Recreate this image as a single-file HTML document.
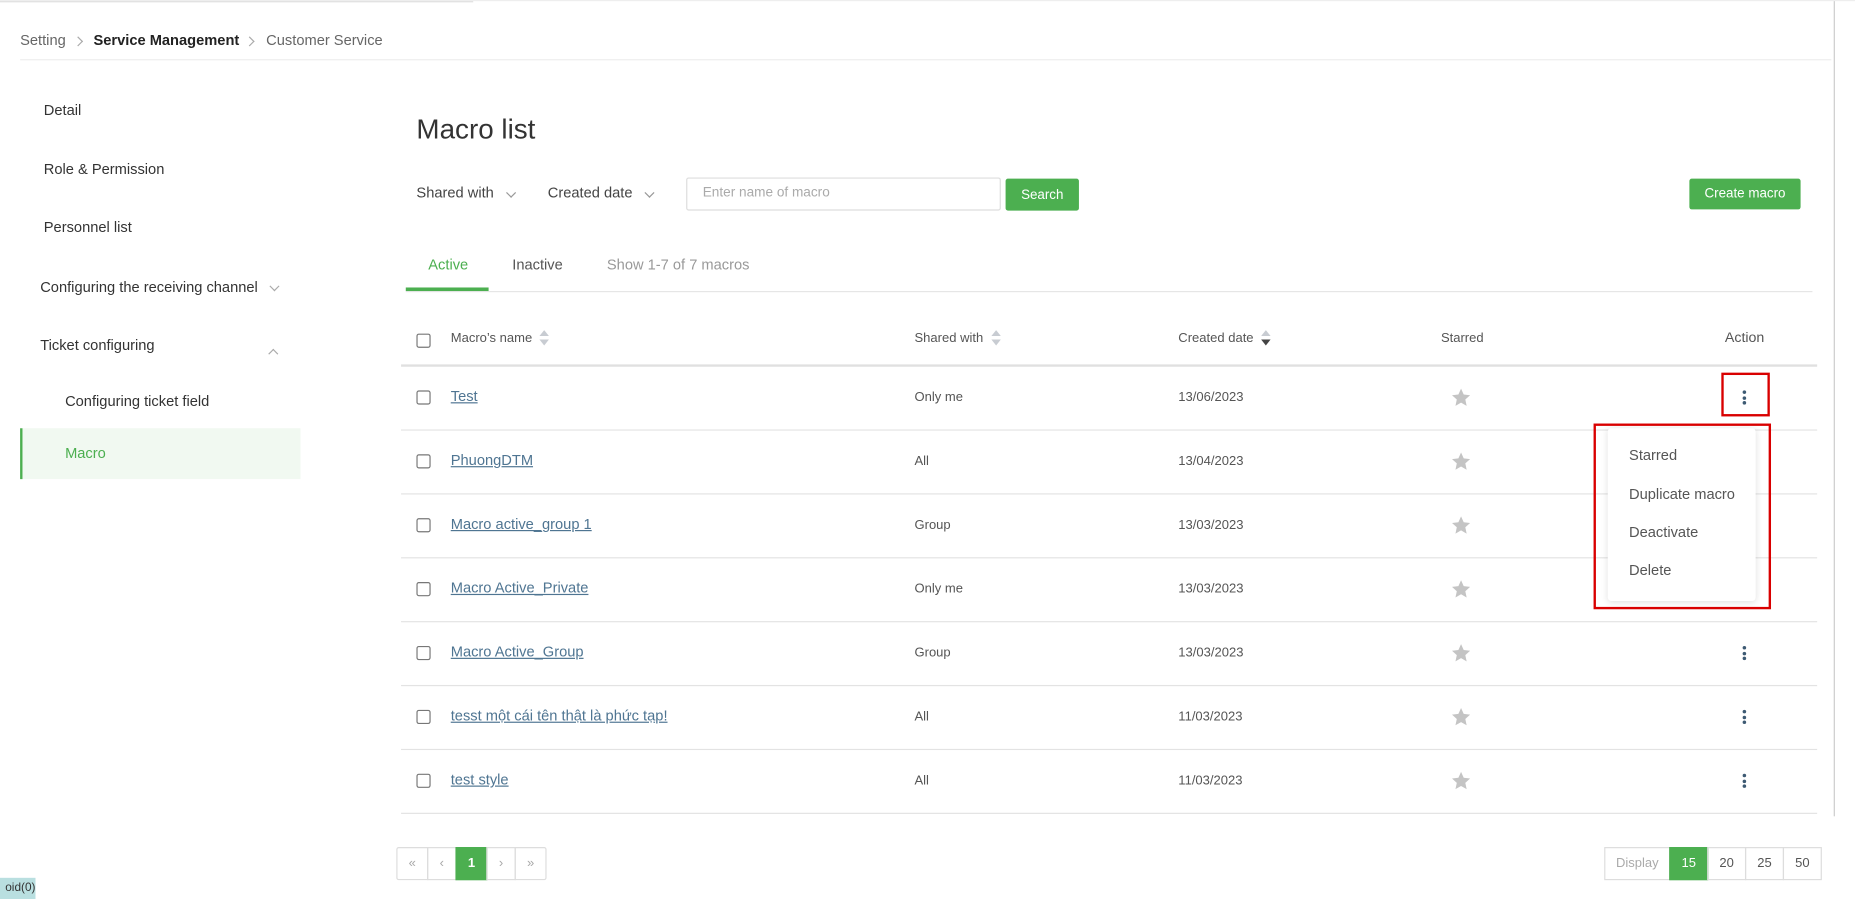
<!DOCTYPE html>
<html><head><meta charset="utf-8">
<style>
html,body{margin:0;padding:0;background:#fff;width:1855px;height:899px;overflow:hidden}
#w{position:absolute;left:0;top:0;width:1568px;height:760px;transform:scale(1.18304);transform-origin:0 0;font-family:"Liberation Sans","Noto Sans CJK SC",sans-serif;color:#333}
.a{position:absolute;white-space:nowrap}
.t13{font-size:12.4px}
.t12{font-size:11px}
.chev{display:inline-block;width:5px;height:5px;border-right:1px solid #999;border-bottom:1px solid #999;transform:rotate(45deg)}
.chr{display:inline-block;width:5px;height:5px;border-right:1px solid #aaa;border-top:1px solid #aaa;transform:rotate(45deg)}
.cb{position:absolute;width:10px;height:10px;border:1px solid #777;border-radius:2px}
.lnk{color:#4f7592;text-decoration:underline;font-size:12.4px}
.hl{position:absolute;left:339px;width:1197px;height:1px;background:#e3e3e3}
.star{position:absolute;width:18px;height:18px}
.dots{position:absolute;width:3px}
.dots i{display:block;width:3px;height:3px;border-radius:50%;background:#3d5a73;margin-bottom:1.5px}
.pg{position:absolute;top:716px;height:28px;border:1px solid #ddd;box-sizing:border-box;font-size:11px;color:#aaa;display:flex;align-items:center;justify-content:center}
.mi{font-size:12.4px;color:#555}
</style></head><body><div id="w">
<div class="a" style="left:0;top:0;width:400px;height:2px;background:#e0e0e0"></div>
<div class="a" style="left:1550px;top:0;width:1px;height:690px;background:#ccc"></div>
<div class="a" style="left:0;top:0;width:1568px;height:1px;background:#eee"></div>

<div class="a t13" style="left:17px;top:27px;color:#666">Setting</div>
<div class="a" style="left:63px;top:25px"><span class="chr"></span></div>
<div class="a t13" style="left:79px;top:27px;font-weight:bold;color:#222">Service Management</div>
<div class="a" style="left:208px;top:25px"><span class="chr"></span></div>
<div class="a t13" style="left:225px;top:27px;color:#666">Customer Service</div>
<div class="a" style="left:17px;top:50px;width:1531px;height:1px;background:#eee"></div>

<div class="a t13" style="left:37px;top:86px">Detail</div>
<div class="a t13" style="left:37px;top:136px">Role &amp; Permission</div>
<div class="a t13" style="left:37px;top:185px">Personnel list</div>
<div class="a t13" style="left:34px;top:236px">Configuring the receiving channel</div>
<div class="a" style="left:229px;top:232px"><span class="chev" style="border-color:#aaa"></span></div>
<div class="a t13" style="left:34px;top:285px">Ticket configuring</div>
<div class="a" style="left:228px;top:289px"><span class="chev" style="border-color:#aaa;transform:rotate(225deg)"></span></div>
<div class="a t13" style="left:55px;top:332px">Configuring ticket field</div>
<div class="a" style="left:17px;top:362px;width:237px;height:43px;background:#f1f9f1;border-left:2px solid #4caf50;box-sizing:border-box"></div>
<div class="a t13" style="left:55px;top:376px;color:#4caf50">Macro</div>

<div class="a" style="left:352px;top:96px;font-size:23.5px;color:#333">Macro list</div>
<div class="a t13" style="left:352px;top:156px;color:#444">Shared with</div>
<div class="a" style="left:429px;top:153px"><span class="chev"></span></div>
<div class="a t13" style="left:463px;top:156px;color:#444">Created date</div>
<div class="a" style="left:546px;top:153px"><span class="chev"></span></div>
<div class="a" style="left:580px;top:150px;width:266px;height:28px;border:1px solid #ddd;box-sizing:border-box;border-radius:2px"></div>
<div class="a" style="left:594px;top:157px;color:#aaa;font-size:11.5px">Enter name of macro</div>
<div class="a" style="left:850px;top:151px;width:62px;height:27px;background:#4caf50;color:#fff;border-radius:2px;display:flex;align-items:center;justify-content:center;font-size:11.3px">Search</div>
<div class="a" style="left:1428px;top:151px;width:94px;height:26px;background:#4caf50;color:#fff;border-radius:2px;display:flex;align-items:center;justify-content:center;font-size:11.3px">Create macro</div>

<div class="a t13" style="left:362px;top:217px;color:#4caf50">Active</div>
<div class="a t13" style="left:433px;top:217px;color:#555">Inactive</div>
<div class="a t13" style="left:513px;top:217px;color:#999">Show 1-7 of 7 macros</div>
<div class="a" style="left:343px;top:246px;width:1189px;height:1px;background:#e5e5e5"></div>
<div class="a" style="left:343px;top:243px;width:70px;height:3px;background:#4caf50"></div>

<div class="cb" style="left:352px;top:282px"></div>
<div class="a t12" style="left:381px;top:280px;color:#555">Macro’s name</div>
<div class="a t12" style="left:773px;top:280px;color:#555">Shared with</div>
<div class="a t12" style="left:996px;top:280px;color:#555">Created date</div>
<div class="a t12" style="left:1218px;top:280px;color:#555">Starred</div>
<div class="a" style="left:1458px;top:278px;color:#555;font-size:12px">Action</div>
<svg class="a" style="left:456px;top:279px" width="8" height="13"><path d="M4 0 L8 5 L0 5Z M4 13 L8 8 L0 8Z" fill="#c8ccd2"/></svg>
<svg class="a" style="left:838px;top:279px" width="8" height="13"><path d="M4 0 L8 5 L0 5Z M4 13 L8 8 L0 8Z" fill="#c8ccd2"/></svg>
<svg class="a" style="left:1066px;top:279px" width="8" height="13"><path d="M4 0 L8 5 L0 5Z" fill="#c8ccd2"/><path d="M4 13 L8 8 L0 8Z" fill="#444"/></svg>
<div class="a" style="left:339px;top:308px;width:1197px;height:2px;background:#e0e0e0"></div>

<div id="rows"></div>

<div class="a" style="left:1455px;top:315px;width:41px;height:37px;border:2px solid #d90000;box-sizing:border-box"></div>
<div class="a" style="left:1359px;top:362px;width:125px;height:146px;background:#fff;box-shadow:0 1px 6px rgba(0,0,0,.12);border-radius:3px"></div>
<div class="a mi" style="left:1377px;top:378px">Starred</div>
<div class="a mi" style="left:1377px;top:411px">Duplicate macro</div>
<div class="a mi" style="left:1377px;top:443px">Deactivate</div>
<div class="a mi" style="left:1377px;top:475px">Delete</div>
<div class="a" style="left:1347px;top:358px;width:150px;height:157px;border:2px solid #d90000;box-sizing:border-box"></div>

<div class="pg" style="left:335px;width:27px;border-radius:2px 0 0 2px">«</div>
<div class="pg" style="left:361px;width:25px">‹</div>
<div class="pg" style="left:385px;width:27px;background:#4caf50;border-color:#4caf50;color:#fff;font-weight:bold">1</div>
<div class="pg" style="left:411px;width:25px">›</div>
<div class="pg" style="left:435px;width:27px;border-radius:0 2px 2px 0">»</div>

<div class="pg" style="left:1356px;width:56px;color:#aaa">Display</div>
<div class="pg" style="left:1411px;width:33px;background:#4caf50;border-color:#4caf50;color:#fff">15</div>
<div class="pg" style="left:1443px;width:33px;color:#555">20</div>
<div class="pg" style="left:1475px;width:33px;color:#555">25</div>
<div class="pg" style="left:1507px;width:33px;color:#555">50</div>

<div class="a" style="left:0;top:742px;width:30px;height:18px;background:#b9dfe0;font-size:10px;color:#333;line-height:18px;overflow:hidden;text-align:right">oid(0)</div>

<script>
var d=[["Test","Only me","13/06/2023"],["PhuongDTM","All","13/04/2023"],["Macro active_group 1","Group","13/03/2023"],["Macro Active_Private","Only me","13/03/2023"],["Macro Active_Group","Group","13/03/2023"],["tesst một cái tên thật là phức tạp!","All","11/03/2023"],["test style","All","11/03/2023"]];
var h="";
d.forEach(function(r,i){var c=336+i*54;
h+='<div class="cb" style="left:352px;top:'+(c-6)+'px"></div>';
h+='<div class="a lnk" style="left:381px;top:'+(c-8)+'px">'+r[0]+'</div>';
h+='<div class="a t12" style="left:773px;top:'+(c-6)+'px;color:#555">'+r[1]+'</div>';
h+='<div class="a t12" style="left:996px;top:'+(c-6)+'px;color:#555">'+r[2]+'</div>';
h+='<svg class="star" style="left:1226px;top:'+(c-9)+'px" viewBox="0 0 24 24"><path d="M12 2l3 6.6 7.2.8-5.4 4.9 1.5 7.1L12 17.8 5.7 21.4l1.5-7.1L1.8 9.4 9 8.6z" fill="#c4c4c4"/></svg>';
if(i==0||i>3)h+='<div class="dots" style="left:1473px;top:'+(c-6)+'px"><i></i><i></i><i></i></div>';
h+='<div class="hl" style="top:'+(c+27)+'px"></div>';});
document.getElementById("rows").outerHTML=h;
</script>
</div></body></html>
